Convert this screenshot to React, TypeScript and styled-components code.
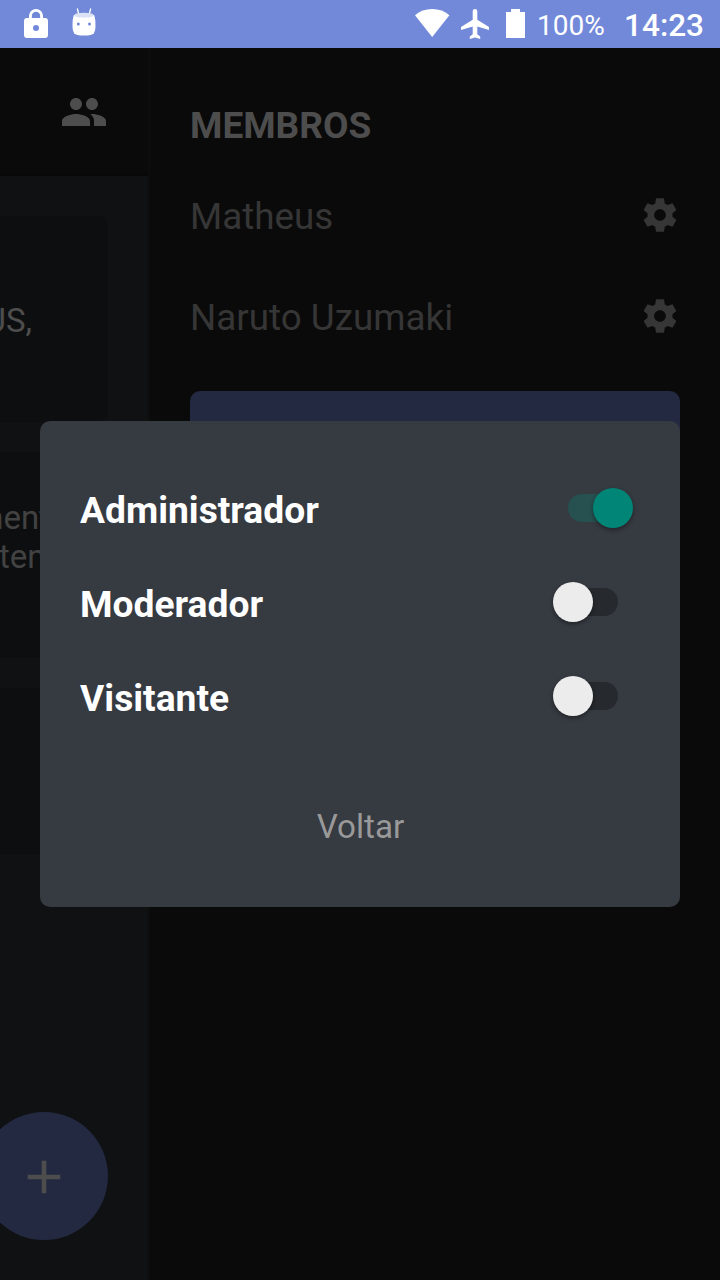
import React from "react";
import styled, { createGlobalStyle } from "styled-components";
import { MdPeople, MdAdd } from "react-icons/md";

const GlobalStyle = createGlobalStyle`
  * { box-sizing: border-box; }
  body { margin: 0; background: #0a0a0a; font-family: Roboto, "Liberation Sans", sans-serif; }
  svg { display: block; flex: none; }
`;

const Screen = styled.div`
  position: relative;
  display: flex;
  flex-direction: column;
  width: 720px;
  height: 1280px;
  overflow: hidden;
  background: #0a0a0a;
`;

const StatusBar = styled.header`
  display: flex;
  align-items: flex-start;
  justify-content: space-between;
  height: 48px;
  padding: 0 16px 0 24px;
  background: #7289da;
  color: #fff;
`;

const StatusGroup = styled.div<{ $gap: number; $top: number }>`
  display: flex;
  align-items: flex-start;
  gap: ${(p) => p.$gap}px;
  padding-top: ${(p) => p.$top}px;
`;

const StatusEnd = styled.div`
  display: flex;
`;

const StatusIcons = styled(StatusGroup)`
  margin-right: 17px;
`;

const BatteryText = styled.span`
  width: 69px;
  margin-left: 12px;
  font-size: 28px;
  line-height: 32px;
  padding-top: 10px;
`;

const Clock = styled.span`
  margin-left: 18px;
  font-size: 31.5px;
  font-weight: 500;
  line-height: 36px;
  padding-top: 8px;
`;

const Body = styled.div`
  display: flex;
  flex: 1;
  min-height: 0;
`;

const Feed = styled.section`
  display: flex;
  flex-direction: column;
  width: 148px;
  background: #101113;
  overflow: hidden;
`;

const FeedHeader = styled.div`
  display: flex;
  justify-content: flex-end;
  height: 128px;
  padding: 40px 40px 0 0;
  border-bottom: 2px solid #080808;
  background: #0a0a0a;
  color: #4d4d4d;
`;

const FeedList = styled.div`
  display: flex;
  flex: 1;
  flex-direction: column;
  gap: 30px;
  padding: 40px 40px 0 0;
`;

const Card = styled.article<{ $height: number }>`
  height: ${(p) => p.$height}px;
  border-radius: 0 10px 10px 0;
  background: #0d0e10;
  color: #4d4d4d;
  font-size: 33px;
  line-height: 39px;
  white-space: nowrap;
`;

const CardTitle = styled.p`
  margin: 0;
  padding: 85px 76px 0 0;
  display: flex;
  justify-content: flex-end;
`;

const CardText = styled.p`
  margin: 0;
  padding-top: 46px;
  color: #424242;
`;

const CardLine = styled.span<{ $shift: number }>`
  display: block;
  margin-left: ${(p) => p.$shift}px;
`;

const AddButton = styled.button`
  display: flex;
  align-items: center;
  justify-content: center;
  width: 128px;
  height: 128px;
  margin: 0 0 40px -20px;
  padding: 1px 0 0;
  border: 0;
  border-radius: 50%;
  background: #222941;
  color: #4d4d4d;
`;

const Drawer = styled.aside`
  flex: 1;
  padding: 57px 40px 0;
  border-left: 2px solid #0d0d0e;
  background: #0a0a0a;
`;

const DrawerTitle = styled.h2`
  margin: 0;
  color: #4d4d4d;
  font-size: 37px;
  font-weight: 700;
  line-height: 42px;
`;

const MemberList = styled.div`
  padding-top: 17px;
`;

const Member = styled.div`
  display: flex;
  align-items: center;
  justify-content: space-between;
  height: 101px;
  color: #363636;
  font-size: 36.8px;
`;

const MemberName = styled.span`
  padding-top: 3px;
`;

const MemberButton = styled.div`
  height: 84px;
  margin-top: 25px;
  border-radius: 10px;
  background: #222941;
`;

const Dialog = styled.div`
  position: absolute;
  top: 421px;
  left: 40px;
  display: flex;
  flex-direction: column;
  width: 640px;
  height: 486px;
  padding: 40px 40px 0;
  border-radius: 10px;
  background: #363a41;
  color: #fff;
`;

const Role = styled.div`
  display: flex;
  align-items: center;
  justify-content: space-between;
  height: 94px;
  padding-right: 22px;
  font-size: 37.2px;
  font-weight: 700;
`;

const RoleName = styled.span`
  padding-top: 3px;
`;

const Track = styled.div<{ $on: boolean }>`
  display: flex;
  align-items: center;
  justify-content: ${(p) => (p.$on ? "flex-end" : "flex-start")};
  width: 50px;
  height: 28px;
  border-radius: 14px;
  background: ${(p) => (p.$on ? "#265150" : "#26292d")};
`;

const Thumb = styled.div<{ $on: boolean }>`
  flex: none;
  width: 40px;
  height: 40px;
  margin: 0 -15px;
  border-radius: 50%;
  background: ${(p) => (p.$on ? "#008577" : "#ececec")};
  box-shadow: 0 2px 4px rgba(0, 0, 0, 0.4);
`;

const BackButton = styled.button`
  margin-top: 64px;
  padding: 0 0 0 1px;
  border: 0;
  background: none;
  color: #999;
  font: 400 33.2px/40px Roboto, sans-serif;
`;

const LockIcon = () => (
  <svg width="24" height="30" viewBox="0 0 24 30" fill="currentColor">
    <path d="M6.4 11V8a5.600 5.600 0 0 1 11.200 0v3" fill="none" stroke="currentColor" strokeWidth="2.800" />
    <path
      fillRule="evenodd"
      d="M3 10h18q3 0 3 3v14q0 3-3 3H3q-3 0-3-3V13q0-3 3-3zm9 7.100a3 3 0 1 0 0 6 3 3 0 0 0 0-6z"
    />
  </svg>
);

const WifiIcon = () => (
  <svg width="35" height="28" viewBox="0 0 35 28" fill="currentColor">
    <path d="M17.200 28 0 6.200C4.800 2.200 10.400 0 17.200 0s12.400 2.200 17.200 6.200z" />
  </svg>
);

const PlaneIcon = () => (
  <svg width="28" height="30" viewBox="0 0 28 30" fill="currentColor">
    <path d="M28 21v-3l-11.700-7.300V2.300a2.300 2.300 0 0 0-4.600 0v8.400L0 18v3l11.700-3.500v7.700L8.800 27.600V30l5.200-1.400 5.200 1.400v-2.400l-2.900-2.400v-7.700z" />
  </svg>
);

const BatteryIcon = () => (
  <svg width="19" height="29" viewBox="0 0 19 29" fill="currentColor">
    <path d="M5 0h9v3h5v26H0V3h5z" />
  </svg>
);

const MascotIcon = () => (
  <svg width="24" height="28" viewBox="0 0 24 28" fill="currentColor">
    <path d="M5.3.5 6.7 6M18.7.5 17.3 6" stroke="currentColor" strokeWidth="1.3" />
    <path d="M1.8 7Q.5 11 .5 17q0 6 1.7 8.2Q4 27.5 12 27.5t9.8-2.3q1.7-2.2 1.7-8.2 0-6-1.3-10z" />
    <path d="M2 7.2Q3.5 4.8 12 4.8t10 2.4q-1 1.7-3.5 1.8-2 1-4 .3-2.500.9-5 0-2 .7-4-.3Q3 8.700 2 7.200z" fill="#dce2f6" />
    <circle cx="6.300" cy="16" r="1.500" fill="#7289da" />
    <circle cx="17.500" cy="16" r="1.500" fill="#7289da" />
  </svg>
);

const GearIcon = () => (
  <svg width="40" height="40" viewBox="0 0 24 24" fill="currentColor">
    <path d="M19.43 12.98c.04-.32.07-.64.07-.98s-.03-.66-.07-.98l2.11-1.65c.19-.15.24-.42.12-.64l-2-3.46c-.12-.22-.39-.3-.61-.22l-2.49 1c-.52-.4-1.08-.73-1.69-.98l-.38-2.65C14.46 2.18 14.25 2 14 2h-4c-.25 0-.46.18-.49.42l-.38 2.65c-.61.25-1.17.59-1.69.98l-2.49-1c-.23-.09-.49 0-.61.22l-2 3.46c-.13.22-.07.49.12.64l2.11 1.65c-.04.32-.07.65-.07.98s.03.66.07.98l-2.11 1.65c-.19.15-.24.42-.12.64l2 3.46c.12.22.39.3.61.22l2.49-1c.52.4 1.08.73 1.69.98l.38 2.65c.03.24.24.42.49.42h4c.25 0 .46-.18.49-.42l.38-2.65c.61-.25 1.17-.59 1.69-.98l2.49 1c.23.09.49 0 .61-.22l2-3.46c.12-.22.07-.49-.12-.64l-2.11-1.65zM12 15.5c-1.93 0-3.5-1.57-3.5-3.5s1.57-3.5 3.5-3.5 3.5 1.57 3.5 3.5-1.57 3.5-3.5 3.5z" />
  </svg>
);

const members = ["Matheus", "Naruto Uzumaki"];
const roles = [
  { name: "Administrador", on: true },
  { name: "Moderador", on: false },
  { name: "Visitante", on: false },
];

export default function App() {
  return (
    <Screen>
      <GlobalStyle />
      <StatusBar>
        <StatusGroup $gap={24} $top={8}>
          <LockIcon />
          <MascotIcon />
        </StatusGroup>
        <StatusEnd>
          <StatusIcons $gap={11} $top={9}>
            <WifiIcon />
            <PlaneIcon />
          </StatusIcons>
          <StatusGroup $gap={0} $top={9}>
            <BatteryIcon />
          </StatusGroup>
          <StatusGroup $gap={0} $top={0}>
            <BatteryText>100%</BatteryText>
            <Clock>14:23</Clock>
          </StatusGroup>
        </StatusEnd>
      </StatusBar>
      <Body>
        <Feed>
          <FeedHeader>
            <MdPeople size={48} />
          </FeedHeader>
          <FeedList>
            <Card $height={206}>
              <CardTitle>US,</CardTitle>
            </Card>
            <Card $height={206}>
              <CardText>
                <CardLine $shift={-25.5}>ment</CardLine>
                <CardLine $shift={-1}>ten</CardLine>
              </CardText>
            </Card>
            <Card $height={166} />
          </FeedList>
          <AddButton aria-label="Adicionar">
            <MdAdd size={56} />
          </AddButton>
        </Feed>
        <Drawer>
          <DrawerTitle>MEMBROS</DrawerTitle>
          <MemberList>
            {members.map((name) => (
              <Member key={name}>
                <MemberName>{name}</MemberName>
                <GearIcon />
              </Member>
            ))}
          </MemberList>
          <MemberButton />
        </Drawer>
      </Body>
      <Dialog role="dialog">
        {roles.map((role) => (
          <Role key={role.name}>
            <RoleName>{role.name}</RoleName>
            <Track $on={role.on}>
              <Thumb $on={role.on} />
            </Track>
          </Role>
        ))}
        <BackButton>Voltar</BackButton>
      </Dialog>
    </Screen>
  );
}
